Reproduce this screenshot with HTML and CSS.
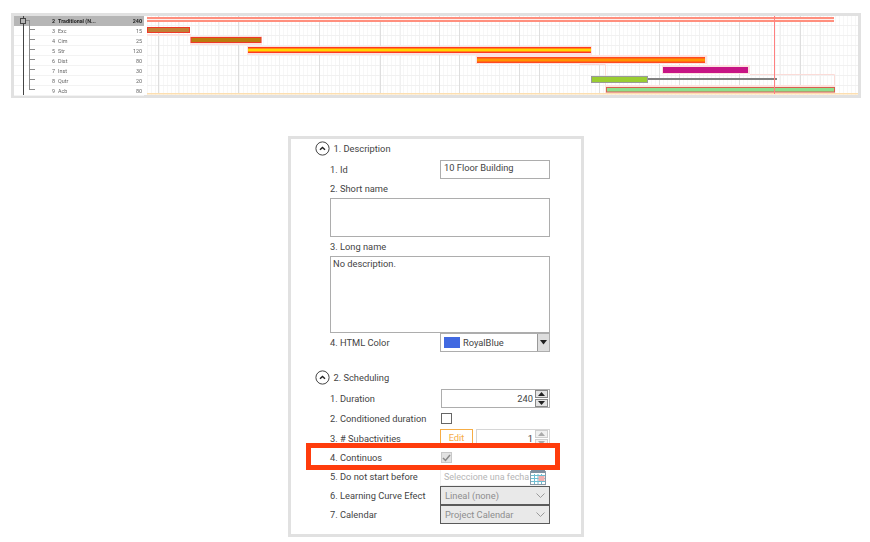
FILE: index.html
```html
<!DOCTYPE html>
<html lang="en">
<head>
<meta charset="utf-8">
<title>Activity properties</title>
<link rel="stylesheet" href="styles.css">
</head>
<body>
<section class="gantt">
  <div class="tree">
    <div class="trow sel"><span class="num">2</span><span class="name">Traditional (N...</span><span class="dur">240</span></div>
    <div class="trow"><span class="num">3</span><span class="name">Exc</span><span class="dur">15</span></div>
    <div class="trow"><span class="num">4</span><span class="name">Cim</span><span class="dur">25</span></div>
    <div class="trow"><span class="num">5</span><span class="name">Str</span><span class="dur">120</span></div>
    <div class="trow"><span class="num">6</span><span class="name">Dist</span><span class="dur">80</span></div>
    <div class="trow"><span class="num">7</span><span class="name">Inst</span><span class="dur">30</span></div>
    <div class="trow"><span class="num">8</span><span class="name">Qutr</span><span class="dur">20</span></div>
    <div class="trow"><span class="num">9</span><span class="name">Acb</span><span class="dur">80</span></div>
    <svg class="tree-lines" width="40" height="79" viewBox="14 16 40 79">
      <path d="M29.5 20V90M29.5 29.5H35M29.5 39.5H35M29.5 49.5H35M29.5 59.5H35M29.5 69.5H35M29.5 79.5H35M29.5 89.5H35M25 20.5H29" fill="none" stroke="#8a8a8a"/>
      <path d="M23.5 16V95" fill="none" stroke="#444"/>
      <rect x="20.5" y="18.5" width="5" height="5" fill="#b5b5b5" stroke="#444"/>
    </svg>
  </div>
  <svg class="chart" width="711" height="79" viewBox="147 16 711 79">
    <defs>
      <pattern id="minor" x="147" y="16" width="4" height="10" patternUnits="userSpaceOnUse">
        <path d="M0.5 0V10" stroke="#f7f7f7"/>
        <path d="M0 9.5H4" stroke="#f1f1f1"/>
      </pattern>
    </defs>
    <rect x="147" y="16" width="711" height="79" fill="url(#minor)"/>
    <path d="M178.5 16V94M198.5 16V94M218.5 16V94M258.5 16V94M279.5 16V94M299.5 16V94M339.5 16V94M359.5 16V94M400.5 16V94M419.5 16V94M479.5 16V94M499.5 16V94M559.5 16V94M579.5 16V94M619.5 16V94M639.5 16V94M699.5 16V94M719.5 16V94M759.5 16V94M780.5 16V94M820.5 16V94" stroke="#f0f0f0"/>
    <path d="M158.5 16V94M238.5 16V94M319.5 16V94M380.5 16V94M439.5 16V94M459.5 16V94M519.5 16V94M539.5 16V94M599.5 16V94M659.5 16V94M679.5 16V94M739.5 16V94M800.5 16V94" stroke="#dedede"/>
    <g fill="#fde3e0">
      <rect x="147" y="34" width="44" height="2"/>
      <rect x="190" y="36" width="72" height="9"/>
      <rect x="247" y="46" width="345" height="9"/>
      <rect x="476" y="55" width="231" height="9"/>
      <rect x="662" y="65" width="88" height="9"/>
      <rect x="605" y="85" width="230" height="9"/>
    </g>
    <path d="M580 64.5H605.5V85M750 74.5H834.5V85" fill="none" stroke="#fbdcd8"/>
    <rect x="147" y="17" width="687" height="5" fill="#ff8f7e"/>
    <rect x="147" y="19" width="687" height="1" fill="#fff0ec"/>
    <rect x="147.5" y="27.5" width="42" height="5" fill="#c17f35" stroke="#f03828"/>
    <rect x="191" y="37.5" width="70" height="5" fill="#b97c0d" stroke="#f03828"/>
    <rect x="248" y="47" width="343" height="6" fill="#ff3a20"/>
    <rect x="248" y="48.5" width="343" height="3" fill="#ffd800"/>
    <rect x="477" y="57" width="228" height="6" fill="#ff4a20"/>
    <rect x="477" y="58.5" width="228" height="3" fill="#ff9400"/>
    <rect x="663" y="67" width="85" height="6" fill="#c71585"/>
    <rect x="591.5" y="76.5" width="56" height="6" fill="#9acd32" stroke="#999"/>
    <rect x="648" y="78" width="129" height="2" fill="#808080"/>
    <rect x="606.5" y="87.5" width="228" height="4.5" fill="#8ce08c" stroke="#d8604e"/>
    <rect x="147" y="93" width="711" height="1.5" fill="#fddfb0"/>
    <path d="M774.5 16V94" stroke="#ff8080"/>
  </svg>
</section>

<section class="panel">
  <div class="head"><span class="toggle"><svg width="15" height="15" viewBox="0 0 15 15"><circle cx="7.5" cy="7.5" r="6.6" fill="none" stroke="#444"/><path d="M5 8.7L7.5 6.4L10 8.7" fill="none" stroke="#222" stroke-width="1.5"/></svg></span>1. Description</div>
  <div class="row first"><label>1. Id</label><div class="box text id">10 Floor Building</div></div>
  <div class="row"><label>2. Short name</label></div>
  <div class="box area short"></div>
  <div class="row"><label>3. Long name</label></div>
  <div class="box area long">No description.</div>
  <div class="row"><label>4. HTML Color</label>
    <div class="box color"><span class="swatch"></span><span class="cname">RoyalBlue</span><span class="drop"><svg width="7" height="5" viewBox="0 0 7 5"><path d="M0 0H7L3.5 4.5Z" fill="#222"/></svg></span></div>
  </div>
  <div class="head second"><span class="toggle"><svg width="15" height="15" viewBox="0 0 15 15"><circle cx="7.5" cy="7.5" r="6.6" fill="none" stroke="#444"/><path d="M5 8.7L7.5 6.4L10 8.7" fill="none" stroke="#222" stroke-width="1.5"/></svg></span>2. Scheduling</div>
  <div class="row duration"><label>1. Duration</label>
    <div class="box num-input"><span class="val">240</span>
      <span class="spin"><span class="sbtn"><svg width="7" height="4" viewBox="0 0 7 4"><path d="M0 4L3.5 0L7 4Z" fill="#222"/></svg></span><span class="sbtn"><svg width="7" height="4" viewBox="0 0 7 4"><path d="M0 0H7L3.5 4Z" fill="#222"/></svg></span></span>
    </div>
  </div>
  <div class="row tall"><label>2. Conditioned duration</label><span class="check"></span></div>
  <div class="row tall"><label>3. # Subactivities</label>
    <div class="sub">
      <span class="edit">Edit</span>
      <div class="box num-input off"><span class="val">1</span>
        <span class="spin"><span class="sbtn"><svg width="7" height="4" viewBox="0 0 7 4"><path d="M0 4L3.5 0L7 4Z" fill="#aaa"/></svg></span><span class="sbtn"><svg width="7" height="4" viewBox="0 0 7 4"><path d="M0 0H7L3.5 4Z" fill="#aaa"/></svg></span></span>
      </div>
    </div>
  </div>
  <div class="row"><label>4. Continuos</label><span class="check on"><svg width="9" height="8" viewBox="0 0 9 8"><path d="M1 4L3.5 6.5L8 1" fill="none" stroke="#888" stroke-width="1.5"/></svg></span></div>
  <div class="row"><label>5. Do not start before</label>
    <div class="date"><span class="hint">Seleccione una fecha</span>
      <svg class="cal" width="16" height="16" viewBox="0 0 16 16"><rect x="0.5" y="2.5" width="15" height="13" fill="#fff" stroke="#8a9aa8"/><rect x="1" y="1" width="14" height="3" fill="#7f8f9f"/><path d="M1 6.5H15M1 9.5H15M1 12.5H15M4.5 5V15M8 5V15M11.5 5V15" stroke="#6fbdd2"/><rect x="8.5" y="7" width="6" height="5" fill="#f2b0b0"/></svg>
    </div>
  </div>
  <div class="row"><label>6. Learning Curve Efect</label><div class="dis">Lineal (none)<svg width="9" height="5" viewBox="0 0 9 5"><path d="M0.5 0.5L4.5 4.5L8.5 0.5" fill="none" stroke="#999"/></svg></div></div>
  <div class="row"><label>7. Calendar</label><div class="dis">Project Calendar<svg width="9" height="5" viewBox="0 0 9 5"><path d="M0.5 0.5L4.5 4.5L8.5 0.5" fill="none" stroke="#999"/></svg></div></div>
  <div class="mark"></div>
</section>
</body>
</html>
```

FILE: styles.css
```css
* { box-sizing: border-box; }
html, body { margin: 0; padding: 0; background: #fff; }
body {
  width: 870px;
  height: 542px;
  overflow: hidden;
  font-family: Roboto, "Noto Sans", sans-serif;
  color: #444;
}

/* Gantt strip */
.gantt {
  display: flex;
  width: 850px;
  height: 85px;
  margin: 13px 0 0 11px;
  border: 3px solid #e1e1e1;
  background: #fff;
}
.tree {
  position: relative;
  width: 130px;
  height: 79px;
  margin-right: 3px;
  flex: none;
}
.tree-lines { position: absolute; left: 0; top: 0; filter: blur(0.3px); }
.trow {
  display: grid;
  grid-template-columns: 41px 50px 38px;
  height: 10px;
  align-items: center;
  font-size: 5.4px;
  line-height: 10px;
  color: #666;
  border-bottom: 1px solid #f3f3f3;
  filter: blur(0.3px);
}
.trow.sel { background: #b6b6b6; color: #222; font-weight: 700; border: 0; }
.num { text-align: right; }
.name { padding-left: 3px; }
.dur { text-align: right; padding-right: 1px; }
.chart { display: block; flex: none; filter: blur(0.45px); }

/* Property panel */
.panel {
  position: relative;
  width: 296px;
  height: 401px;
  margin: 38px 0 0 288px;
  padding: 0 31px 0 39px;
  border: 3px solid #e1e1e1;
  background: #fff;
  font-size: 9.3px;
}
.head {
  display: flex;
  align-items: center;
  height: 19px;
  margin-left: -15px;
}
.head.second { height: 19px; margin-top: 16px; margin-bottom: 1px; }
.toggle { display: flex; width: 18.5px; flex: none; }
.row {
  display: flex;
  align-items: center;
  height: 19px;
}
.row.first { margin-top: 2px; }
.row.duration { margin-top: 2px; }
.row.tall { height: 20px; }
.row label { width: 110px; flex: none; }
.box { border: 1px solid #adadad; background: #fff; color: #444; }
.text { width: 110px; height: 19px; padding-left: 3px; line-height: 14px; }
.area { width: 220px; padding: 0 2px; line-height: 13px; }
.short { height: 39px; }
.long { height: 77px; }
.color {
  display: flex;
  align-items: center;
  width: 110px;
  height: 19px;
  padding-left: 3px;
}
.swatch { width: 16px; height: 11px; background: #4169e1; flex: none; }
.cname { margin-left: 3px; flex: 1; }
.drop {
  display: flex;
  align-items: center;
  justify-content: center;
  width: 12px;
  height: 17px;
  background: #dedede;
  border-left: 1px solid #999;
}
.num-input {
  display: flex;
  align-items: center;
  width: 109px;
  height: 19px;
  margin-left: 1px;
}
.num-input .val { flex: 1; text-align: right; padding-right: 2px; }
.spin { display: flex; flex-direction: column; gap: 1px; width: 13px; height: 17px; margin-right: 1px; }
.sbtn {
  display: flex;
  align-items: center;
  justify-content: center;
  height: 8px;
  background: #e3e3e3;
  border: 1px solid #888;
}
.check {
  display: flex;
  align-items: center;
  justify-content: center;
  width: 11px;
  height: 11px;
  margin-left: 1px;
  border: 1px solid #666;
  background: #fff;
}
.check.on { background: #e2e2e2; border-color: #c8c8c8; }
.sub { display: flex; align-items: center; gap: 3px; }
.edit {
  width: 33px;
  height: 18px;
  border: 1px solid #f6ad45;
  color: #f6ad45;
  text-align: center;
  line-height: 16px;
}
.num-input.off {
  width: 74px;
  margin-left: 0;
  border-color: #d6d6d6;
}
.num-input.off .sbtn { background: #f0f0f0; border-color: #cfcfcf; }
.date {
  display: flex;
  align-items: center;
  justify-content: space-between;
  width: 106px;
  height: 19px;
  padding-left: 3px;
  color: #b5b5b5;
  border: 1px solid #f0f0f0;
  border-right: 0;
}
.hint { white-space: nowrap; overflow: hidden; font-size: 9px; }
.cal { flex: none; }
.dis {
  display: flex;
  align-items: center;
  justify-content: space-between;
  width: 110px;
  height: 19px;
  padding: 0 4px;
  background: #e9e9e9;
  border: 1px solid #5a5a5a;
  color: #8e8e8e;
}
.mark {
  position: absolute;
  left: 15px;
  top: 304px;
  width: 254px;
  height: 27px;
  border: 5px solid #ff3c0c;
}
```
